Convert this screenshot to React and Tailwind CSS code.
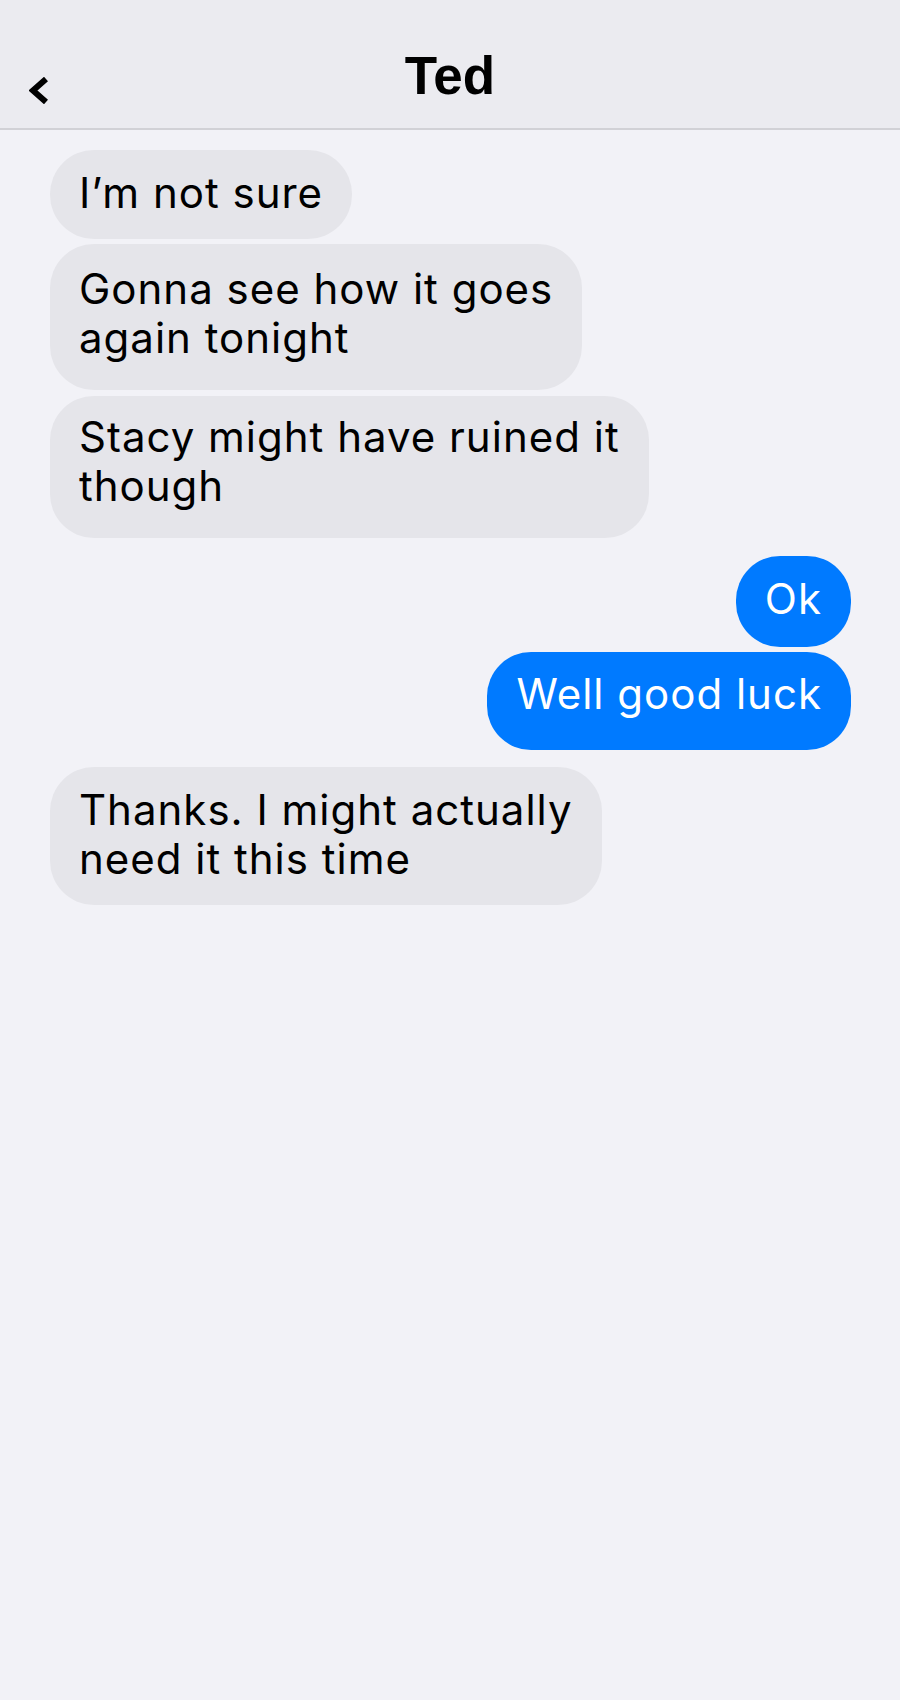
import React from "react";

const messages = [
  { id: 1, me: false, lines: ["I’m not sure"], pad: "pt-[18px] pb-[22px]", gap: "mt-0" },
  { id: 2, me: false, lines: ["Gonna see how it goes", "again tonight"], pad: "pt-[20px] pb-[28px]", gap: "mt-[5px]" },
  { id: 3, me: false, lines: ["Stacy might have ruined it", "though"], pad: "pt-[16px] pb-[28px]", gap: "mt-[6px]" },
  { id: 4, me: true, lines: ["Ok"], pad: "pt-[18px] pb-[24px]", gap: "mt-[18px]" },
  { id: 5, me: true, lines: ["Well good luck"], pad: "pt-[17px] pb-[32px]", gap: "mt-[5px]" },
  { id: 6, me: false, lines: ["Thanks. I might actually", "need it this time"], pad: "pt-[18px] pb-[22px]", gap: "mt-[17px]" },
];

const Bubble = ({ msg }) => (
  <div className={`flex ${msg.me ? "justify-end" : "justify-start"} ${msg.gap}`}>
    <div
      className={`w-fit rounded-[44px] pl-[29px] pr-[29px] text-[42px] leading-[49px] tracking-[1px] whitespace-nowrap ${msg.pad} ${
        msg.me ? "bg-[#007aff] text-white" : "bg-[#e5e5ea] text-black"
      }`}
    >
      {msg.lines.map((line, i) => (
        <div key={i}>{line}</div>
      ))}
    </div>
  </div>
);

const App = () => {
  return (
    <div className="min-h-[1700px] bg-[#f2f2f7] font-['Inter','Noto_Sans',sans-serif]">
      <header className="h-[130px] bg-[#ebebf0] border-b-2 border-[#d1d1d6] grid grid-cols-[1fr_auto_1fr] pt-[49px] px-[29px]">
        <div className="pt-[28px]">
          <svg width="20" height="27" viewBox="0 0 20 27" fill="none">
            <polyline
              points="17,2 4,13.5 17,25"
              stroke="#000"
              strokeWidth="6"
              strokeLinejoin="miter"
              strokeLinecap="butt"
            />
          </svg>
        </div>
        <h1 className="font-['Liberation_Sans',Arial,sans-serif] font-bold text-[53px] leading-[53px] text-black">
          Ted
        </h1>
        <div />
      </header>

      <main className="pt-[20px] pl-[50px] pr-[49px]">
        {messages.map((msg) => (
          <Bubble key={msg.id} msg={msg} />
        ))}
      </main>
    </div>
  );
};

export default App;
